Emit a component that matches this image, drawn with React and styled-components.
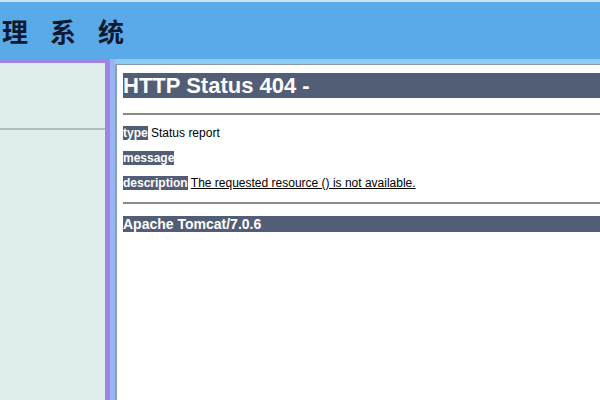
import React from "react";
import styled, { createGlobalStyle } from "styled-components";

const Global = createGlobalStyle`
  html, body { margin: 0; padding: 0; width: 600px; height: 400px; overflow: hidden; background: #ffffff; }
`;

const Page = styled.div`
  width: 600px;
  height: 400px;
  display: flex;
  flex-direction: column;
  overflow: hidden;
`;

const Header = styled.header`
  height: 57px;
  border-top: 2px solid #cfe3f5;
  background: #5aa9e9;
  display: flex;
  align-items: center;
  padding-left: 2px;
  flex-shrink: 0;
`;

const Title = styled.h1`
  margin: 0;
  font-family: "Noto Sans CJK SC", "Noto Sans", sans-serif;
  font-weight: 700;
  font-size: 26px;
  letter-spacing: 22px;
  color: #0c1a30;
  white-space: nowrap;
`;

const Main = styled.div`
  flex: 1;
  display: flex;
  min-height: 0;
`;

const LeftFrame = styled.aside`
  width: 105px;
  flex-shrink: 0;
  background: #e0eded;
  border-top: 4px solid #9f85e3;
  border-right: 5px solid #9f85e3;
  display: flex;
  flex-direction: column;
`;

const MenuBlock = styled.div`
  height: 65px;
  border-bottom: 2px solid #b3bcbc;
`;

const RightFrame = styled.section`
  flex: 1;
  display: flex;
  flex-direction: column;
  background: #8ecdf2;
  border-left: 5px solid #98b4f2;
  padding-top: 5px;
  min-width: 0;
`;

const Doc = styled.div`
  flex: 1;
  background: #ffffff;
  border-top: 1px solid #8c9aa8;
  border-left: 2px solid #86a2b6;
  padding: 8px 0 0 6px;
  font-family: "Liberation Sans", Arial, sans-serif;
  color: #000;
`;

const H1 = styled.h1`
  margin: 0 0 15px;
  height: 25px;
  line-height: 25px;
  font-size: 22px;
  font-weight: 700;
  color: #ffffff;
  background: #525d76;
  white-space: nowrap;
`;

const Rule = styled.hr`
  margin: 0;
  border: 0;
  height: 2px;
  background: #8a8a8a;
`;

const P = styled.p`
  margin: 12px 0 ${(p) => (p.$last ? "12px" : "0")};
  font-size: 12px;
  line-height: 13px;
  white-space: nowrap;
`;

const Label = styled.b`
  color: #ffffff;
  background: #525d76;
  font-weight: 700;
`;

const U = styled.u`
  text-decoration: underline;
`;

const H3 = styled.h3`
  margin: 12px 0 0;
  height: 16px;
  line-height: 16px;
  font-size: 14px;
  font-weight: 700;
  color: #ffffff;
  background: #525d76;
  white-space: nowrap;
`;

export default function App() {
  return (
    <Page>
      <Global />
      <Header>
        <Title>理系统</Title>
      </Header>
      <Main>
        <LeftFrame>
          <MenuBlock />
        </LeftFrame>
        <RightFrame>
          <Doc>
            <H1>HTTP Status 404 - </H1>
            <Rule />
            <P>
              <Label>type</Label> Status report
            </P>
            <P>
              <Label>message</Label> <U></U>
            </P>
            <P $last>
              <Label>description</Label> <U>The requested resource () is not available.</U>
            </P>
            <Rule />
            <H3>Apache Tomcat/7.0.6</H3>
          </Doc>
        </RightFrame>
      </Main>
    </Page>
  );
}
